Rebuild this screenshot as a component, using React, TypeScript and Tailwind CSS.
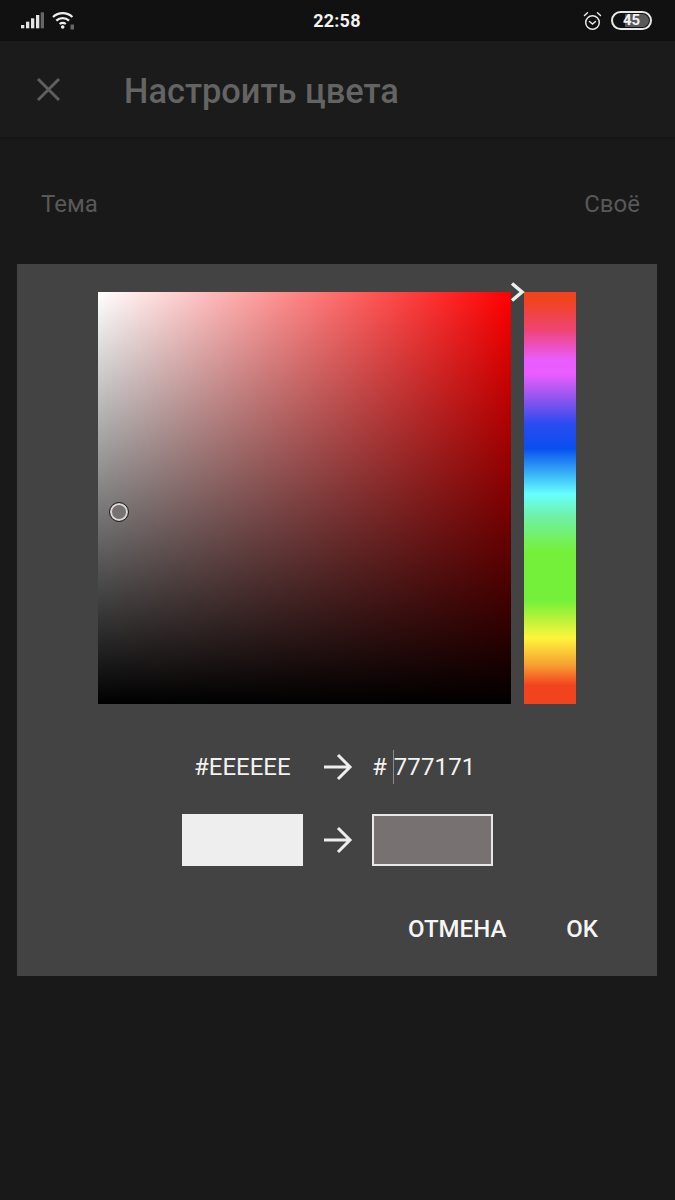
export default function App() {
  return (
    <div className="flex h-[1200px] w-[675px] flex-col overflow-hidden bg-[#191919] font-['Roboto',sans-serif]">
      <div className="flex h-[41px] items-center justify-between bg-[#111111] pl-[21px] pr-[23px]">
        <div className="flex w-[200px] items-center gap-[8px]">
          <svg width="23" height="18" viewBox="0 0 23 18" fill="#e4e4e4">
            <rect x="0" y="13" width="3.300" height="3.300" />
            <rect x="5" y="9.700" width="3.300" height="6.600" />
            <rect x="10" y="6.300" width="3.300" height="10" />
            <rect x="15" y="3" width="3.300" height="13.300" />
            <rect x="19.700" y="0.300" width="3.300" height="16" fill="#666666" />
          </svg>
          <svg width="23" height="19" viewBox="0 0 23 19" fill="none" stroke="#eeeeee" strokeWidth="2.200">
            <path d="M1 6C6.400 0.800 15 0.800 20.400 6" />
            <path d="M4.300 9.600C8 6.200 13.400 6.200 17.100 9.600" />
            <path d="M7.600 13C9.400 11.600 12 11.600 13.800 13" />
            <circle cx="10.700" cy="16" r="1.800" fill="#eeeeee" stroke="none" />
            <rect x="18.500" y="13.500" width="3.500" height="5" fill="#666666" stroke="none" />
          </svg>
        </div>
        <div className="ml-[1px] text-[18px] font-bold leading-none tracking-[0.2px] text-[#f2f2f2]">22:58</div>
        <div className="flex w-[200px] items-center justify-end gap-[9px]">
          <svg width="19" height="20" viewBox="0 0 19 20" fill="none" stroke="#e8e8e8" strokeWidth="1.500" strokeLinecap="round">
            <circle cx="9.500" cy="11.500" r="6.800" />
            <path d="M6.500 10.500l3 2.500 3-2.500" />
            <path d="M1.500 4.500L4.500 1.800M17.500 4.500L14.500 1.800" />
          </svg>
          <div className="relative flex h-[19px] w-[41px] items-center justify-center overflow-hidden rounded-[10px] border-2 border-[#e8e8e8]">
            <div className="absolute inset-y-[1px] right-[1px] w-[24px] rounded-r-[7px] bg-[#5a5a5a]"></div>
            <span className="relative text-[15px] font-bold leading-none text-[#f0f0f0]">45</span>
          </div>
        </div>
      </div>

      <div className="flex h-[96px] items-center bg-[#1b1b1b] shadow-[0_1px_3px_rgba(0,0,0,0.25)]">
        <div className="flex w-[124px] justify-start pl-[36px]">
          <svg width="25" height="25" viewBox="0 0 25 25" fill="none" stroke="#5f5f5f" strokeWidth="3">
            <path d="M2 2L23 23M23 2L2 23" />
          </svg>
        </div>
        <div className="pt-[4px] text-[34.400px] font-medium leading-none text-[#646464]">Настроить цвета</div>
      </div>

      <div className="flex h-[127px] items-center justify-between pl-[41px] pr-[35px] pt-[7px] text-[24px] leading-none text-[#585858]">
        <span>Тема</span>
        <span>Своё</span>
      </div>

      <div className="ml-[17px] flex h-[712px] w-[640px] flex-col bg-[#434343] pt-[28px]">
        <div className="flex pl-[81px]">
          <div className="relative h-[412px] w-[413px] bg-[linear-gradient(to_top,#000000,transparent),linear-gradient(to_right,#ffffff,#ff0000)]">
            <div className="absolute left-[12px] top-[211px] h-[18px] w-[18px] rounded-full border-2 border-[#d8d8d8] bg-[#777171] outline outline-1 outline-[#222222]"></div>
          </div>
          <div className="relative ml-[13px] h-[412px] w-[52px] bg-[linear-gradient(to_bottom,#f2431f_0%,#f2431f_2%,#ee4470_9%,#e95cff_16.500%,#e95cff_20%,#8f55ee_26%,#2b4bf0_32%,#0850f0_38%,#30a0f5_43%,#66ffff_49%,#70f0a0_55%,#75f03a_63%,#75f03a_75%,#fff53c_84%,#f7a030_90.500%,#f2431f_95.500%,#f2431f_100%)]">
            <svg className="absolute left-[-14px] top-[-10px]" width="15" height="20" viewBox="0 0 15 20" fill="none" stroke="#eeeeee" strokeWidth="3.500">
              <path d="M2 1.500L12 10L2 18.500" />
            </svg>
          </div>
        </div>

        <div className="mt-[44px] flex h-[38px] items-center text-[24px] leading-none text-[#f2f2f2]">
          <div className="w-[306px] pl-[177px]">#EEEEEE</div>
          <svg width="30" height="28" viewBox="0 0 30 28" fill="none" stroke="#eeeeee" strokeWidth="3">
            <path d="M1 14H27M15 2L27 14L15 26" />
          </svg>
          <div className="ml-[19px] flex items-center">
            <span>#</span>
            <span className="ml-[6px] h-[34px] w-px bg-[#8a8a8a]"></span>
            <span className="tracking-[0.1px]">777171</span>
          </div>
        </div>

        <div className="mt-[28px] flex h-[52px] items-center pl-[165px]">
          <div className="h-[52px] w-[121px] bg-[#eeeeee]"></div>
          <svg className="ml-[20px]" width="30" height="28" viewBox="0 0 30 28" fill="none" stroke="#eeeeee" strokeWidth="3">
            <path d="M1 14H27M15 2L27 14L15 26" />
          </svg>
          <div className="ml-[19px] h-[52px] w-[121px] border-2 border-[#e8e8e8] bg-[#777171]"></div>
        </div>

        <div className="mt-[51px] flex items-center justify-end pr-[59px] text-[24px] font-medium leading-none text-[#f5f5f5]">
          <span>ОТМЕНА</span>
          <span className="ml-[60px]">OK</span>
        </div>
      </div>
    </div>
  );
}
